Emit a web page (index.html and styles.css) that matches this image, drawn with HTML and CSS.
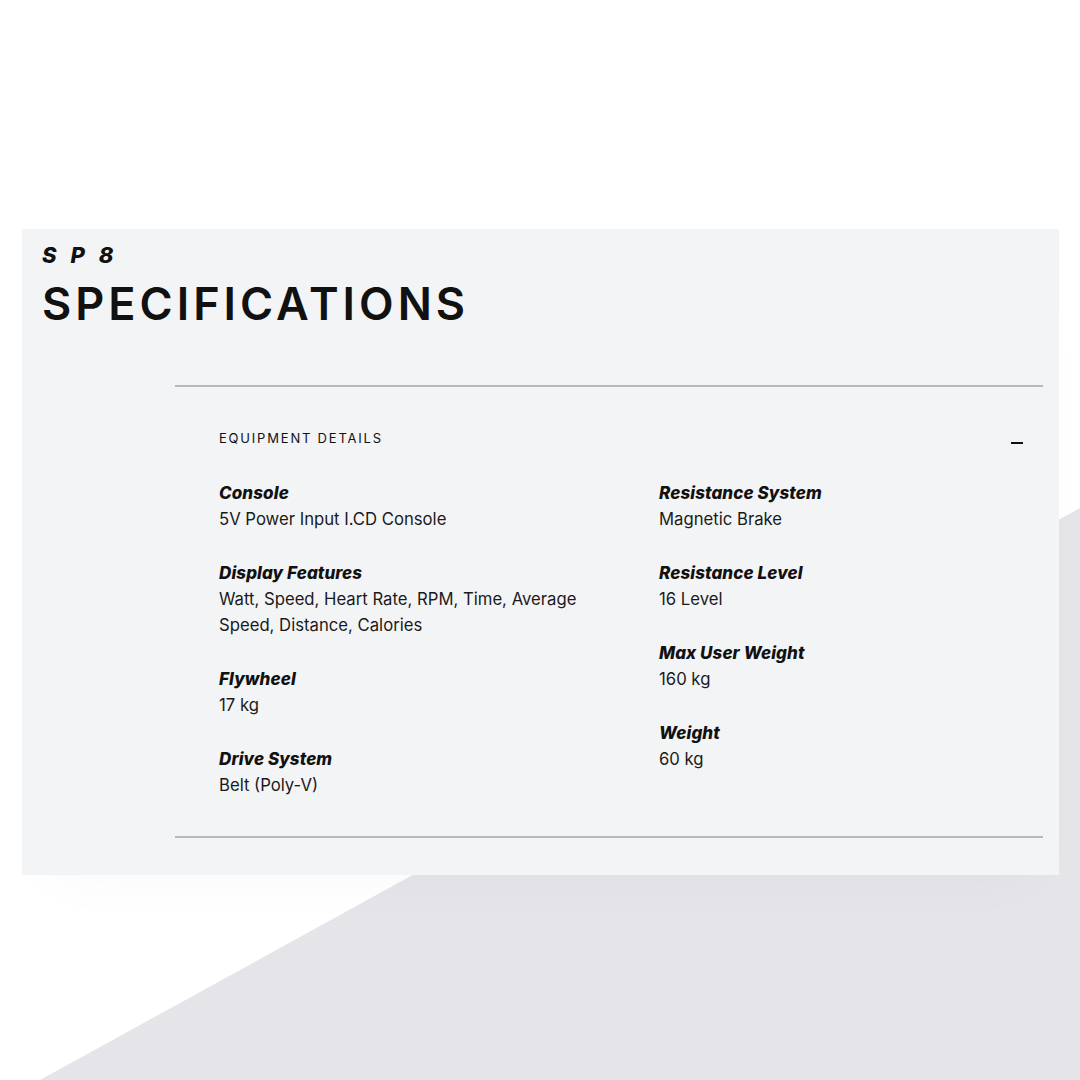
FILE: index.html
```html
<!DOCTYPE html>
<html lang="en">
<head>
<meta charset="utf-8">
<title>SP8 Specifications</title>
<link rel="stylesheet" href="styles.css">
</head>
<body>
<div class="page">
  <section class="card">
    <header class="card-head">
      <p class="model">SP8</p>
      <h1 class="title">SPECIFICATIONS</h1>
    </header>
    <div class="accordion">
      <div class="acc-head">
        <h2 class="acc-title">EQUIPMENT DETAILS</h2>
        <span class="acc-toggle" aria-hidden="true"></span>
      </div>
      <div class="spec-grid">
        <div class="spec-col">
          <div class="spec">
            <div class="spec-label">Console</div>
            <div class="spec-value">5V Power Input I.CD Console</div>
          </div>
          <div class="spec">
            <div class="spec-label">Display Features</div>
            <div class="spec-value">Watt, Speed, Heart Rate, RPM, Time, Average Speed, Distance, Calories</div>
          </div>
          <div class="spec">
            <div class="spec-label">Flywheel</div>
            <div class="spec-value">17 kg</div>
          </div>
          <div class="spec">
            <div class="spec-label">Drive System</div>
            <div class="spec-value">Belt (Poly-V)</div>
          </div>
        </div>
        <div class="spec-col">
          <div class="spec">
            <div class="spec-label">Resistance System</div>
            <div class="spec-value">Magnetic Brake</div>
          </div>
          <div class="spec">
            <div class="spec-label">Resistance Level</div>
            <div class="spec-value">16 Level</div>
          </div>
          <div class="spec">
            <div class="spec-label">Max User Weight</div>
            <div class="spec-value">160 kg</div>
          </div>
          <div class="spec">
            <div class="spec-label">Weight</div>
            <div class="spec-value">60 kg</div>
          </div>
        </div>
      </div>
    </div>
  </section>
</div>
</body>
</html>
```

FILE: styles.css
```css
* { box-sizing: border-box; }

html, body {
  margin: 0;
  padding: 0;
}

body {
  font-family: "Inter", "Liberation Sans", sans-serif;
  color: #111;
  background: #ffffff;
}

.page {
  position: relative;
  width: 1080px;
  height: 1080px;
  overflow: hidden;
  padding-top: 229px;
  padding-left: 22px;
}

.page::before {
  content: "";
  position: absolute;
  inset: 0;
  background: #e4e4e9;
  clip-path: polygon(40px 1080px, 1080px 508px, 1080px 1080px);
}

.card {
  position: relative;
  width: 1037px;
  height: 646px;
  background: #f3f4f6;
  padding: 11px 16px 0 20px;
  box-shadow: 0 30px 60px -30px rgba(0, 0, 0, 0.03);
}

.card-head {
  margin: 0;
}

.model {
  margin: 0;
  font-size: 22px;
  line-height: 30px;
  font-weight: 800;
  font-style: italic;
  letter-spacing: 14px;
}

.title {
  margin: 7px 0 0;
  font-size: 45px;
  line-height: 54px;
  font-weight: 600;
  letter-spacing: 4px;
}

.accordion {
  margin: 54px 0 0 133px;
  border-top: 2px solid #b7b8bb;
  border-bottom: 2px solid #b7b8bb;
  padding: 42px 20px 38px 44px;
}

.acc-head {
  display: flex;
  align-items: center;
  justify-content: space-between;
  height: 18px;
}

.acc-title {
  margin: 0;
  font-size: 13px;
  font-weight: 400;
  letter-spacing: 1.8px;
  line-height: 18px;
}

.acc-toggle {
  display: block;
  width: 12px;
  height: 2px;
  background: #111;
  margin-top: 10px;
}

.spec-grid {
  display: grid;
  grid-template-columns: 400px 1fr;
  column-gap: 40px;
  margin-top: 33px;
}

.spec {
  margin-bottom: 28px;
}

.spec:last-child {
  margin-bottom: 0;
}

.spec-label {
  font-size: 17px;
  line-height: 26px;
  font-weight: 800;
  font-style: italic;
  letter-spacing: 0.1px;
}

.spec-value {
  font-size: 16.7px;
  line-height: 26px;
  font-weight: 400;
  color: #1a1a1a;
}
```
